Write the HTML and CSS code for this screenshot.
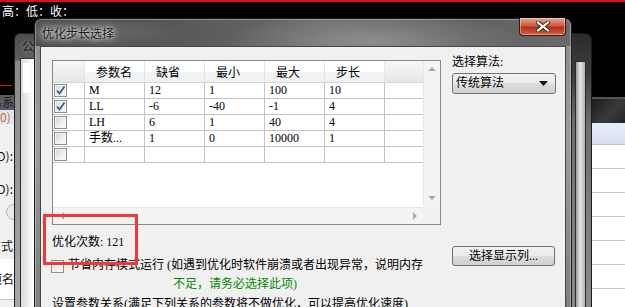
FILE: index.html
```html
<!DOCTYPE html>
<html lang="zh-CN">
<head>
  <meta charset="UTF-8">
  <title>优化步长选择</title>
  <link rel="stylesheet" href="styles.css">
</head>
<body>

  <div class="quote-bar">高：低：收：</div>
  <div class="chart-line"></div>

  <!-- windows behind the dialog -->
  <div class="win-left">
    <div class="wl-title"><span>交易系</span></div>
    <div class="wl-sel"><span>0)</span></div>
    <div class="wl-row wl-first"><span>(D):</span></div>
    <div class="wl-row"><span>(D):</span></div>
    <div class="wl-radio"></div>
    <div class="wl-row"><span>方式</span></div>
    <div class="wl-box"><span>项名</span></div>
  </div>

  <div class="win-back">
    <div class="wb-title">公</div>
    <div class="wb-client"><div class="wb-edit"></div></div>
  </div>

  <div class="win-right">
    <div class="wr-client"></div>
  </div>

  <div class="win-far">
    <div class="wf-head"></div>
    <div class="wf-sel"></div>
    <div class="wf-row"></div>
    <div class="wf-row"></div>
    <div class="wf-row"></div>
    <div class="wf-row"></div>
    <div class="wf-row"></div>
    <div class="wf-row"></div>
  </div>

  <!-- main dialog -->
  <div class="dialog">
    <div class="dialog-title">
      <span class="title-text">优化步长选择</span>
      <div class="close-btn">
        <svg width="14" height="11" viewBox="0 0 14 11">
          <path d="M2 1.5 L12 9.5 M12 1.5 L2 9.5" stroke="#3a1a14" stroke-width="4" stroke-linecap="square"/>
          <path d="M2 1.5 L12 9.5 M12 1.5 L2 9.5" stroke="#fff" stroke-width="2.2" stroke-linecap="square"/>
        </svg>
      </div>
    </div>

    <div class="dialog-client">
      <div class="left-col">
        <div class="grid-box">
          <div class="grid-view">
            <div class="cell head head-check"></div>
            <div class="cell head">参数名</div>
            <div class="cell head">缺省</div>
            <div class="cell head">最小</div>
            <div class="cell head">最大</div>
            <div class="cell head">步长</div>
            <div class="cell head head-end"></div>

            <div class="cell check"><span class="checkbox on"><svg width="11" height="11" viewBox="0 0 11 11"><path d="M2 5.5 L4.5 8.5 L9.5 1.5" fill="none" stroke="#3d5c9c" stroke-width="1.8"/></svg></span></div>
            <div class="cell">M</div><div class="cell">12</div><div class="cell">1</div><div class="cell">100</div><div class="cell">10</div><div class="cell end"></div>

            <div class="cell check"><span class="checkbox on"><svg width="11" height="11" viewBox="0 0 11 11"><path d="M2 5.5 L4.5 8.5 L9.5 1.5" fill="none" stroke="#3d5c9c" stroke-width="1.8"/></svg></span></div>
            <div class="cell">LL</div><div class="cell">-6</div><div class="cell">-40</div><div class="cell">-1</div><div class="cell">4</div><div class="cell end"></div>

            <div class="cell check"><span class="checkbox"></span></div>
            <div class="cell">LH</div><div class="cell">6</div><div class="cell">1</div><div class="cell">40</div><div class="cell">4</div><div class="cell end"></div>

            <div class="cell check"><span class="checkbox"></span></div>
            <div class="cell">手数...</div><div class="cell">1</div><div class="cell">0</div><div class="cell">10000</div><div class="cell">1</div><div class="cell end"></div>

            <div class="cell check"><span class="checkbox"></span></div>
            <div class="cell"></div><div class="cell"></div><div class="cell"></div><div class="cell"></div><div class="cell"></div><div class="cell end"></div>
          </div>
          <div class="vscroll">
            <span class="arrow arrow-up"></span>
            <span class="arrow arrow-down"></span>
          </div>
          <div class="hscroll">
            <span class="arrow arrow-left"></span>
            <span class="arrow arrow-right"></span>
          </div>
          <div class="corner"></div>
        </div>

        <div class="opt-count">优化次数: 121</div>

        <div class="mem-row">
          <span class="checkbox"></span>
          <div class="mem-text">
            <div>节省内存模式运行 (如遇到优化时软件崩溃或者出现异常，说明内存</div>
            <div class="warn">不足，请务必选择此项)</div>
          </div>
        </div>

        <div class="relation">设置参数关系(满足下列关系的参数将不做优化，可以提高优化速度)</div>
      </div>

      <div class="right-col">
        <div class="algo-label">选择算法:</div>
        <div class="combo">
          <span>传统算法</span>
          <svg width="9" height="5" viewBox="0 0 9 5"><path d="M0 0 H9 L4.5 5 Z" fill="#111"/></svg>
        </div>
        <button class="btn-cols">选择显示列...</button>
      </div>
    </div>
  </div>

  <div class="highlight"></div>

</body>
</html>
```

FILE: styles.css
```css
body{
  margin: 0;
  width: 625px;
  height: 307px;
  background-color: #000;
  overflow: hidden;
  position: relative;
  font-family: "Liberation Serif", "Noto Sans CJK SC", serif;
  font-size: 12px;
}

.quote-bar{
  border-top: 2px solid #e01010;
  color: #fff;
  font-family: "Noto Sans CJK SC", sans-serif;
  line-height: 16px;
  padding: 1px 0 0 2px;
}

.chart-line{
  position: absolute;
  left: 0;
  top: 85px;
  width: 12px;
  height: 1px;
  background-color: #e01010;
}

/* leftmost window, mostly hidden */
.win-left{
  position: absolute;
  left: 0;
  top: 95px;
  width: 14px;
  bottom: 0;
  background-color: #f0f0f0;
  overflow: hidden;
  display: flex;
  flex-direction: column;
  font-family: "Noto Sans CJK SC", sans-serif;
  color: #111;
}

.win-left span{
  white-space: nowrap;
}

.wl-title,
.wl-sel,
.wl-row,
.wl-box{
  display: flex;
  justify-content: flex-end;
  line-height: 14px;
  overflow: hidden;
  flex-shrink: 0;
}

.wl-title{
  height: 15px;
  background-color: #5d5d5d;
  color: #1d1d1d;
}

.wl-sel{
  height: 14px;
  background-color: #dde4f4;
  color: #d07010;
  justify-content: flex-start;
}

.wl-row{
  height: 14px;
  margin-top: 19px;
  margin-right: 1px;
}

.wl-first{
  margin-top: 25px;
}

.wl-radio{
  margin: 8px 0 0 6px;
  width: 14px;
  height: 14px;
  flex-shrink: 0;
  border-radius: 50%;
  border: 1px solid #b8b8b8;
  background-color: #e8e8e8;
}

.wl-box{
  margin-top: 6px;
  height: 40px;
  background-color: #fff;
  border-bottom: 1px solid #c8c8c8;
  align-items: center;
}

/* window behind, left */
.win-back{
  position: absolute;
  left: 14px;
  top: 33px;
  width: 40px;
  height: 290px;
  border: 1px solid #1e1e1e;
  border-radius: 6px 0 0 0;
  background: linear-gradient(#4c4c4c, #5e5e5e 26px, #8a8a8a 27px, #a8a8a8);
  box-sizing: border-box;
  padding-left: 5px;
}

.wb-title{
  font-family: "Noto Sans CJK SC", sans-serif;
  color: #161616;
  line-height: 24px;
  padding-left: 2px;
  text-shadow: 0 0 4px rgba(255,255,255,0.5);
}

.wb-client{
  height: 260px;
  background: linear-gradient(to right, #d8d8d8, #ffffff 40%, #bdbdbd);
  border: 1px solid #333;
}

.wb-edit{
  margin: 4px 0 0 2px;
  width: 8px;
  height: 30px;
  background-color: #fff;
}

/* window behind, right */
.win-right{
  position: absolute;
  left: 548px;
  top: 33px;
  width: 44px;
  height: 290px;
  border: 1px solid #1a1a1a;
  border-radius: 0 7px 0 0;
  background: linear-gradient(#2c2c2c, #3e3e3e 40px, #6f6f6f 90px, #8d8d8d);
  box-sizing: border-box;
  padding: 27px 5px 0 26px;
}

.wr-client{
  height: 260px;
  border: 1px solid #2a2a2a;
  background: linear-gradient(to right, #9a9a9a, #e6e6e6 45%, #b4b4b4);
}

.win-far{
  position: absolute;
  left: 592px;
  top: 97px;
  width: 40px;
  bottom: 0;
  background-color: #fff;
  border-top: 2px solid #555;
}

.wf-head{
  height: 24px;
  background: linear-gradient(135deg, #1b1b1b, #3a3a3a 50%, #1e1e1e);
}

.wf-sel{
  height: 21px;
  background: linear-gradient(#e8edf9, #d7dff2);
  border-bottom: 1px solid #b9c3d8;
}

.wf-row{
  height: 23px;
  border-bottom: 1px solid #c9c9c9;
}

/* main dialog */
.dialog{
  position: absolute;
  left: 34px;
  top: 18px;
  width: 538px;
  height: 300px;
  box-sizing: border-box;
  border: 1px solid #1c1c1c;
  border-radius: 7px 7px 0 0;
  padding: 0 5px;
  background:
    radial-gradient(ellipse 150px 30px at 340px 22px, rgba(170,170,170,0.55), transparent),
    radial-gradient(ellipse 110px 18px at 40px 14px, rgba(150,150,150,0.45), transparent),
    linear-gradient(#00000000 27px, #8e8e8e 27px, #9c9c9c 120px, #7c7c7c),
    linear-gradient(to right, #444, #575757 25%, #6c6c6c 55%, #606060 80%, #6a6a6a);
  box-shadow: inset 0 0 0 1px rgba(255,255,255,0.3);
}

.dialog-title{
  height: 27px;
  display: flex;
  align-items: center;
}

.title-text{
  font-family: "Noto Sans CJK SC", sans-serif;
  color: #1c1c1c;
  padding: 0 0 1px 2px;
  text-shadow: 0 0 6px rgba(255,255,255,0.8), 0 0 3px rgba(255,255,255,0.6), 0 0 10px rgba(255,255,255,0.5);
}

.close-btn{
  margin-left: auto;
  align-self: flex-start;
  margin-top: -1px;
  width: 47px;
  height: 18px;
  box-sizing: border-box;
  border: 1px solid #3a1510;
  border-top: none;
  border-radius: 0 0 4px 4px;
  background: linear-gradient(#e6a795, #cc5a40 45%, #b0301c 55%, #d4623e);
  box-shadow: inset 0 0 0 1px rgba(255,220,210,0.5);
  display: flex;
  align-items: center;
  justify-content: center;
}

.dialog-client{
  height: 260px;
  background-color: #f0f0f0;
  border: 1px solid #474747;
  display: flex;
  padding: 8px 0 0 11px;
  color: #000;
}

.left-col{
  width: 389px;
}

.grid-box{
  margin-top: 5px;
  width: 389px;
  height: 165px;
  box-sizing: border-box;
  border: 1px solid #828790;
  display: grid;
  grid-template-columns: 370px 17px;
  grid-template-rows: 146px 17px;
  background-color: #fff;
}

.grid-view{
  display: grid;
  grid-template-columns: 32px 60px 60px 60px 60px 60px 38px;
  grid-template-rows: 22px;
  grid-auto-rows: 16px;
  align-content: start;
}

.cell{
  box-sizing: border-box;
  border-right: 1px solid #c4c4c4;
  border-bottom: 1px solid #c4c4c4;
  line-height: 15px;
  padding-left: 4px;
  white-space: nowrap;
  overflow: hidden;
}

.cell.end{
  border-right: none;
}

.cell.head{
  background: linear-gradient(#ffffff 0%, #ffffff 50%, #f3f4f6 50%, #eff0f2 100%);
  border-right-color: #e3e5e8;
  border-bottom-color: #d5d5d5;
  line-height: 21px;
  padding-left: 11px;
  font-family: "Noto Sans CJK SC", sans-serif;
}

.cell.head-check,
.cell.head-end{
  background: linear-gradient(#f7f7f7, #e6e6e6);
}

.cell.head-end{
  border-right: none;
}

.cell.check{
  padding: 1px 0 0 1px;
}

.checkbox{
  display: block;
  width: 13px;
  height: 13px;
  box-sizing: border-box;
  border: 1px solid #8e8f8f;
  background: linear-gradient(135deg, #d6d6d6, #f4f4f4 70%, #fff);
  box-shadow: inset 0 0 0 1px #f4f4f4;
}

.checkbox svg{
  display: block;
}

.vscroll{
  background-color: #f3f3f3;
  border-left: 1px solid #e6e6e6;
  display: flex;
  flex-direction: column;
  justify-content: space-between;
  align-items: center;
  padding: 6px 0 7px;
}

.hscroll{
  background-color: #f3f3f3;
  border-top: 1px solid #e6e6e6;
  display: flex;
  justify-content: space-between;
  align-items: center;
  padding: 0 6px 0 7px;
}

.corner{
  background-color: #f0f0f0;
}

.arrow{
  width: 0;
  height: 0;
  border: 4px solid transparent;
}

.arrow-up{
  border-top: none;
  border-bottom-color: #a9a9a9;
}

.arrow-down{
  border-bottom: none;
  border-top-color: #a9a9a9;
}

.arrow-left{
  border-left: none;
  border-right-color: #a9a9a9;
}

.arrow-right{
  border-right: none;
  border-left-color: #a9a9a9;
}

.opt-count{
  margin-top: 10px;
  line-height: 15px;
}

.mem-row{
  display: flex;
  margin: 8px 0 0 -1px;
}

.mem-row .checkbox{
  margin: 2px 4px 0 0;
}

.mem-text{
  line-height: 15px;
  white-space: nowrap;
}

.warn{
  color: #008a00;
  margin-top: 4px;
  padding-left: 105px;
}

.relation{
  margin-top: 5px;
  line-height: 15px;
  white-space: nowrap;
}

.right-col{
  margin-left: 11px;
  width: 104px;
}

.algo-label{
  line-height: 15px;
}

.combo{
  margin-top: 3px;
  height: 21px;
  box-sizing: border-box;
  border: 1px solid #707070;
  border-radius: 3px;
  background: linear-gradient(#f2f2f2 0%, #ebebeb 50%, #dddddd 50%, #cfcfcf 100%);
  display: flex;
  align-items: center;
  justify-content: space-between;
  padding: 0 7px 0 3px;
  line-height: 15px;
}

.btn-cols{
  margin-top: 152px;
  width: 103px;
  height: 20px;
  border: 1px solid #707070;
  border-radius: 3px;
  background: linear-gradient(#f2f2f2 0%, #ebebeb 50%, #dddddd 50%, #cfcfcf 100%);
  font-family: "Liberation Serif", "Noto Sans CJK SC", serif;
  font-size: 12px;
  color: #000;
  padding: 0;
  line-height: 15px;
}

.highlight{
  position: absolute;
  left: 43px;
  top: 214px;
  width: 95px;
  height: 51px;
  box-sizing: border-box;
  border: 3px solid #f03838;
}
```
